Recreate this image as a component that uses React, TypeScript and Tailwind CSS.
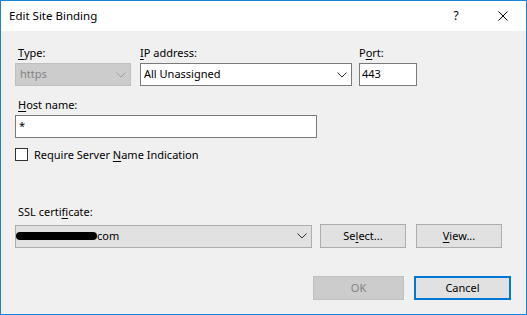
import React from 'react';

const font = { fontFamily: '"Segoe UI", "Noto Sans", "Open Sans", sans-serif' };

function Chevron({ color = '#333' }: { color?: string }) {
  return (
    <svg width="10" height="6" viewBox="0 0 10 6" className="shrink-0">
      <polyline points="0.5,0.5 5,5 9.5,0.5" fill="none" stroke={color} strokeWidth="1" />
    </svg>
  );
}

function Label({ pre, u, post, className = '' }: { pre: string; u: string; post: string; className?: string }) {
  return (
    <div className={`h-[16px] leading-[16px] text-[11px] text-black ${className}`}>
      {pre}
      <span className="underline underline-offset-2">{u}</span>
      {post}
    </div>
  );
}

export default function App() {
  return (
    <div
      className="w-[527px] h-[315px] border border-[#1883d7] bg-[#f0f0f0] flex flex-col overflow-hidden text-[11px]"
      style={font}
    >
      {/* Title bar */}
      <div className="h-[30px] bg-white flex items-center pl-[8px] text-[11.5px] text-black">
        <span>Edit Site Binding</span>
        <span className="ml-auto w-[10px] text-center text-[12px]">?</span>
        <svg width="10" height="10" viewBox="0 0 10 10" className="ml-[37px] mr-[18px]">
          <path d="M0.5 0.5 L9.5 9.5 M9.5 0.5 L0.5 9.5" stroke="#000" strokeWidth="1" />
        </svg>
      </div>

      {/* Body */}
      <div className="flex flex-col pl-[14px] pt-[14px]">
        <div className="flex gap-[9px]">
          <div className="flex flex-col w-[116px]">
            <Label pre="" u="T" post="ype:" className="pl-[3px]" />
            <div className="mt-[2px] h-[23px] bg-[#cccccc] border border-[#bfbfbf] flex items-center pl-[4px] pr-[4px] text-[#838383]">
              <span className="flex-1">https</span>
              <Chevron color="#a0a0a0" />
            </div>
          </div>
          <div className="flex flex-col w-[212px]">
            <Label pre="" u="I" post="P address:" />
            <div className="mt-[2px] h-[23px] bg-white border border-[#7a7a7a] flex items-center pl-[3px] pr-[4px] text-black">
              <span className="flex-1">All Unassigned</span>
              <Chevron />
            </div>
          </div>
          <div className="flex flex-col w-[58px] ml-[-2px]">
            <Label pre="P" u="o" post="rt:" />
            <div className="mt-[2px] h-[23px] bg-white border border-[#7a7a7a] flex items-center pl-[2px] text-black">
              443
            </div>
          </div>
        </div>

        <Label pre="" u="H" post="ost name:" className="pl-[3px] mt-[11px]" />
        <div className="mt-[2px] w-[302px] h-[23px] bg-white border border-[#7a7a7a] flex items-center pl-[3px] text-black">
          *
        </div>

        <div className="mt-[10px] flex items-center h-[13px]">
          <div className="w-[13px] h-[13px] bg-white border border-[#333333]" />
          <div className="ml-[6px] leading-[16px] text-black">
            Require Server <span className="underline underline-offset-2">N</span>ame Indication
          </div>
        </div>

        <Label pre="SSL certi" u="f" post="icate:" className="pl-[3px] mt-[43px]" />
        <div className="mt-[4px] flex items-center">
          <div className="w-[297px] h-[23px] bg-[#e1e1e1] border border-[#adadad] flex items-center pr-[4px] text-black">
            <span className="flex-1 flex items-center">
              <span className="inline-block w-[81px] h-[8px] bg-black rounded-full" />
              <span>com</span>
            </span>
            <Chevron />
          </div>
          <button className="ml-[8px] w-[86px] h-[24px] bg-[#e1e1e1] border border-[#adadad] text-black text-[11px]">
            Se<span className="underline underline-offset-2">l</span>ect...
          </button>
          <button className="ml-[10px] w-[86px] h-[24px] bg-[#e1e1e1] border border-[#adadad] text-black text-[11px]">
            <span className="underline underline-offset-2">V</span>iew...
          </button>
        </div>

        <div className="mt-[28px] flex justify-end pr-[15px] gap-[10px]">
          <button className="w-[91px] h-[24px] bg-[#cccccc] border border-[#bfbfbf] text-[#838383] text-[11px]">
            OK
          </button>
          <button className="w-[97px] h-[24px] bg-[#e1e1e1] border-2 border-[#0078d7] text-black text-[11px]">
            Cancel
          </button>
        </div>
      </div>
    </div>
  );
}
